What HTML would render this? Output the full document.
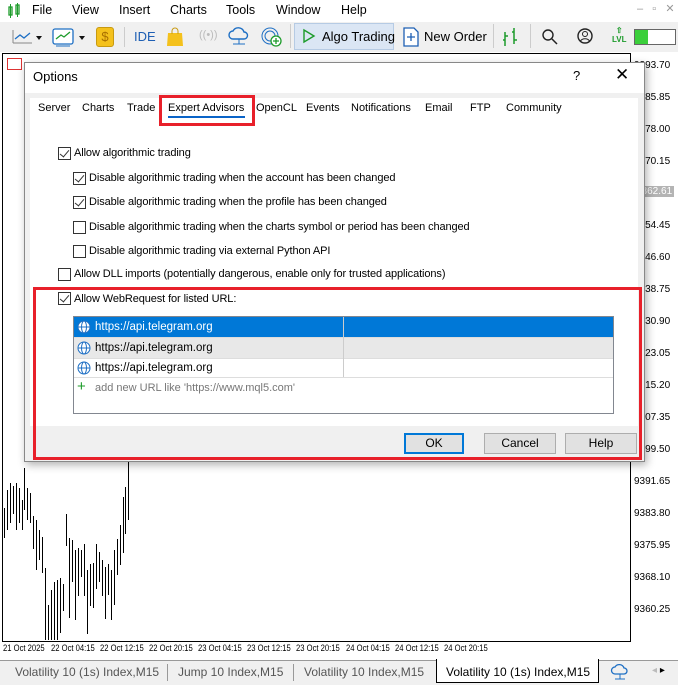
<!DOCTYPE html>
<html><head><meta charset="utf-8"><style>
*{margin:0;padding:0;box-sizing:border-box}
body{width:678px;height:685px;overflow:hidden;background:#f0f0f0;font-family:"Liberation Sans",sans-serif;font-size:12px;color:#000;position:relative}
.a{position:absolute;white-space:nowrap}
.menu span{position:absolute;top:3px;font-size:12.5px}
.cb{position:absolute;width:13px;height:13px;border:1px solid #333;background:#fff}
.cb.on::after{content:"";position:absolute;left:3px;top:0px;width:4px;height:8px;border:solid #333;border-width:0 1.5px 1.5px 0;transform:rotate(40deg)}
.lbl{position:absolute;font-size:11px;letter-spacing:-0.1px}
.btn{position:absolute;width:72px;height:21px;background:#e1e1e1;border:1px solid #adadad;text-align:center;line-height:19px;font-size:12px}
.ax{position:absolute;left:634px;font-size:10px;color:#000}
.tx{position:absolute;top:643px;font-size:9px;transform:scaleX(.85);transform-origin:left}
.tabs span{position:absolute;font-size:11px}
</style></head><body>
<div class="a" style="left:0;top:0;width:678px;height:22px;background:#fff"></div>
<svg class="a" style="left:7px;top:3px" width="14" height="16"><rect x="2" y="4" width="3" height="8" fill="none" stroke="#1c9b2a" stroke-width="1.3"/><rect x="9" y="2" width="3" height="9" fill="none" stroke="#1c9b2a" stroke-width="1.3"/><line x1="3.5" y1="1" x2="3.5" y2="15" stroke="#1c9b2a"/><line x1="10.5" y1="0" x2="10.5" y2="14" stroke="#1c9b2a"/></svg>
<div class="menu"><span style="left:32px">File</span><span style="left:72px">View</span><span style="left:119px">Insert</span><span style="left:170px">Charts</span><span style="left:226px">Tools</span><span style="left:276px">Window</span><span style="left:341px">Help</span></div>
<div class="a" style="left:637px;top:2px;color:#999;font-size:11px">–&nbsp;&nbsp;&nbsp;▫&nbsp;&nbsp;&nbsp;✕</div>
<div class="a" style="left:0;top:22px;width:678px;height:30px;background:#f0f0f0"></div>
<svg class="a" style="left:10px;top:27px" width="34" height="20"><path d="M3 16V3 M3 16H22" stroke="#888" fill="none"/><path d="M5 12l5-4 4 3 6-5" stroke="#1e6fc4" fill="none" stroke-width="1.3"/><path d="M26 9l3 4 3-4z" fill="#111"/></svg>
<svg class="a" style="left:52px;top:27px" width="36" height="22"><rect x="1" y="2" width="20" height="15" rx="2" fill="#fff" stroke="#1e6fc4" stroke-width="1.3"/><path d="M4 12l5-4 3 2 6-5" stroke="#1c9b2a" fill="none" stroke-width="1.3"/><path d="M4 19h14" stroke="#1e6fc4"/><path d="M27 9l3 4 3-4z" fill="#111"/></svg>
<div class="a" style="left:96px;top:27px;width:18px;height:20px;background:#f4c11c;border:1px solid #c89a10;border-radius:3px;text-align:center;font-size:13px;line-height:18px;color:#a86f00">$</div>
<div class="a" style="left:124px;top:27px;width:1px;height:20px;background:#ccc"></div>
<div class="a" style="left:134px;top:29px;color:#1e5fb4;font-size:13px">IDE</div>
<svg class="a" style="left:164px;top:26px" width="22" height="22"><path d="M4 7h14l1 13H3z" fill="#f4c11c"/><path d="M8 8V5a3 3 0 016 0v3" fill="none" stroke="#c89a10"/></svg>
<div class="a" style="left:199px;top:29px;color:#bbb;font-size:11px">((•))</div>
<svg class="a" style="left:228px;top:26px" width="22" height="22"><path d="M5 13a4 4 0 010-8 6 6 0 0111 1 3.5 3.5 0 010 7z" fill="none" stroke="#1e6fc4" stroke-width="1.4"/><path d="M11 13v5M5 18h12" stroke="#1e6fc4"/></svg>
<svg class="a" style="left:260px;top:25px" width="24" height="24"><circle cx="10" cy="11" r="8" fill="none" stroke="#1e6fc4"/><circle cx="10" cy="11" r="5" fill="none" stroke="#1e6fc4"/><circle cx="16" cy="16" r="5" fill="#fff" stroke="#1c9b2a" stroke-width="1.3"/><path d="M16 13v6M13 16h6" stroke="#1c9b2a" stroke-width="1.3"/></svg>
<div class="a" style="left:290px;top:24px;width:1px;height:24px;background:#ccc"></div>
<div class="a" style="left:294px;top:23px;width:100px;height:27px;background:#dbe6f4;border:1px solid #b6cbe4"></div>
<svg class="a" style="left:302px;top:28px" width="14" height="16"><path d="M2 2l10 6-10 6z" fill="none" stroke="#1c9b2a" stroke-width="1.4"/></svg>
<div class="a" style="left:322px;top:29px;font-size:13px">Algo Trading</div>
<svg class="a" style="left:402px;top:26px" width="18" height="22"><path d="M2 2h10l4 4v14H2z" fill="#fff" stroke="#1e5fb4" stroke-width="1.3"/><path d="M9 7v8M5 11h8" stroke="#1e5fb4" stroke-width="1.3"/></svg>
<div class="a" style="left:424px;top:29px;font-size:13px">New Order</div>
<div class="a" style="left:493px;top:24px;width:1px;height:24px;background:#ccc"></div>
<svg class="a" style="left:500px;top:26px" width="22" height="22"><path d="M5 6v14M3 14h2M5 10h3M14 2v16M12 6h2M14 14h3" stroke="#1c9b2a" stroke-width="1.5"/></svg>
<div class="a" style="left:530px;top:24px;width:1px;height:24px;background:#ccc"></div>
<svg class="a" style="left:541px;top:28px" width="18" height="18"><circle cx="7" cy="7" r="5" fill="none" stroke="#222" stroke-width="1.4"/><path d="M11 11l5 5" stroke="#222" stroke-width="1.5"/></svg>
<svg class="a" style="left:576px;top:27px" width="18" height="18"><circle cx="9" cy="9" r="7" fill="none" stroke="#222" stroke-width="1.4"/><circle cx="9" cy="7" r="2.5" fill="none" stroke="#222"/><path d="M4.5 14a5 4 0 019 0" fill="none" stroke="#222"/></svg>
<div class="a" style="left:612px;top:26px;color:#1c9b2a;font-size:8px;line-height:9px;text-align:center;font-weight:bold">⇧<br>LVL</div>
<div class="a" style="left:634px;top:29px;width:42px;height:16px;border:1px solid #666;background:#fff"><div style="width:13px;height:14px;background:#3bcf3b"></div></div>
<div class="a" style="left:0;top:52px;width:678px;height:608px;background:#fff"></div>
<div class="a" style="left:2px;top:53px;width:629px;height:589px;border:1px solid #000"></div>
<div class="a" style="left:7px;top:58px;width:15px;height:12px;border:1px solid #d33;"></div>
<div class="ax" style="top:60px">9393.70</div>
<div class="ax" style="top:92px">9385.85</div>
<div class="ax" style="top:124px">9378.00</div>
<div class="ax" style="top:156px">9370.15</div>
<div class="ax" style="top:186px;background:#b4b4b4;color:#fff;padding:0 2px">9362.61</div>
<div class="ax" style="top:220px">9354.45</div>
<div class="ax" style="top:252px">9346.60</div>
<div class="ax" style="top:284px">9338.75</div>
<div class="ax" style="top:316px">9330.90</div>
<div class="ax" style="top:348px">9323.05</div>
<div class="ax" style="top:380px">9315.20</div>
<div class="ax" style="top:412px">9307.35</div>
<div class="ax" style="top:444px">9399.50</div>
<div class="ax" style="top:476px">9391.65</div>
<div class="ax" style="top:508px">9383.80</div>
<div class="ax" style="top:540px">9375.95</div>
<div class="ax" style="top:572px">9368.10</div>
<div class="ax" style="top:604px">9360.25</div>
<div class="tx" style="left:3px">21 Oct 2025</div>
<div class="tx" style="left:51px">22 Oct 04:15</div>
<div class="tx" style="left:100px">22 Oct 12:15</div>
<div class="tx" style="left:149px">22 Oct 20:15</div>
<div class="tx" style="left:198px">23 Oct 04:15</div>
<div class="tx" style="left:247px">23 Oct 12:15</div>
<div class="tx" style="left:296px">23 Oct 20:15</div>
<div class="tx" style="left:346px">24 Oct 04:15</div>
<div class="tx" style="left:395px">24 Oct 12:15</div>
<div class="tx" style="left:444px">24 Oct 20:15</div>
<svg class="a" style="left:0;top:440px" width="140" height="200" stroke="#000" stroke-width="1" shape-rendering="crispEdges">
<path d="M4.5 68v30M7.5 50v40M10.5 43v40M13.5 46v28M16.5 43v47M19.5 48v35M22.5 60v30M24.5 28v42M27.5 48v32M30.5 53v30M33.5 76v33M36.5 80v50M39.5 90v30M42.5 97v36M45.5 128v90M48.5 165v70M51.5 150v85M54.5 142v71M57.5 140v60M60.5 138v55M63.5 144v27M66.5 74v32M69.5 98v80M72.5 100v42M75.5 110v70M78.5 108v48M81.5 110v27M84.5 104v52M87.5 130v64M90.5 124v42M93.5 123v45M96.5 104v45M99.5 112v30M102.5 120v36M105.5 127v52M108.5 124v31M111.5 130v50M114.5 110v55M117.5 99v36M120.5 85v40M123.5 57v56M125.5 47v47M128.5 20v60"/>
</svg>
<div class="a" style="left:0;top:660px;width:678px;height:25px;background:#f0f0f0;border-top:1px solid #999"></div>
<div class="a" style="left:15px;top:665px;color:#555;font-size:12px">Volatility 10 (1s) Index,M15</div>
<div class="a" style="left:167px;top:664px;width:1px;height:17px;background:#999"></div>
<div class="a" style="left:178px;top:665px;color:#555;font-size:12px">Jump 10 Index,M15</div>
<div class="a" style="left:293px;top:664px;width:1px;height:17px;background:#999"></div>
<div class="a" style="left:304px;top:665px;color:#555;font-size:12px">Volatility 10 Index,M15</div>
<div class="a" style="left:436px;top:659px;width:163px;height:24px;background:#fff;border:1px solid #000;border-top:none"></div>
<div class="a" style="left:446px;top:665px;font-size:12px">Volatility 10 (1s) Index,M15</div>
<svg class="a" style="left:610px;top:663px" width="20" height="18"><path d="M5 11a3.5 3.5 0 010-7 5 5 0 019 1 3 3 0 010 6z" fill="none" stroke="#1e6fc4" stroke-width="1.3"/><path d="M10 11v5M5 16h10" stroke="#1e6fc4"/></svg>
<div class="a" style="left:652px;top:665px;color:#bbb;font-size:10px">◂ <span style="color:#000">▸</span></div>
<div class="a" style="left:24px;top:62px;width:621px;height:400px;background:#f0f0f0;border:1px solid #888;box-shadow:2px 3px 8px rgba(0,0,0,.3)"></div>
<div class="a" style="left:25px;top:63px;width:619px;height:30px;background:#fff"></div>
<div class="a" style="left:33px;top:69px;font-size:13px">Options</div>
<div class="a" style="left:573px;top:68px;font-size:13px">?</div>
<div class="a" style="left:615px;top:65px;font-size:17px;font-weight:300">✕</div>
<div class="a" style="left:30px;top:98px;width:608px;height:328px;background:#fff"></div>
<div class="a tabs" style="top:102px;left:0">
<span style="left:38px">Server</span><span style="left:82px">Charts</span><span style="left:127px">Trade</span><span style="left:168px">Expert Advisors</span><span style="left:256px">OpenCL</span><span style="left:306px">Events</span><span style="left:351px">Notifications</span><span style="left:425px">Email</span><span style="left:470px">FTP</span><span style="left:506px">Community</span></div>
<div class="a" style="left:168px;top:116px;width:77px;height:2px;background:#0a64c8"></div>
<div class="a" style="left:159px;top:95px;width:96px;height:31px;border:3px solid #e8202a"></div>
<div class="cb on" style="left:58px;top:147px"></div><div class="lbl" style="left:74px;top:147px">Allow algorithmic trading</div>
<div class="cb on" style="left:73px;top:172px"></div><div class="lbl" style="left:89px;top:172px">Disable algorithmic trading when the account has been changed</div>
<div class="cb on" style="left:73px;top:196px"></div><div class="lbl" style="left:89px;top:196px">Disable algorithmic trading when the profile has been changed</div>
<div class="cb" style="left:73px;top:221px"></div><div class="lbl" style="left:89px;top:221px">Disable algorithmic trading when the charts symbol or period has been changed</div>
<div class="cb" style="left:73px;top:245px"></div><div class="lbl" style="left:89px;top:245px">Disable algorithmic trading via external Python API</div>
<div class="cb" style="left:58px;top:268px"></div><div class="lbl" style="left:74px;top:268px">Allow DLL imports (potentially dangerous, enable only for trusted applications)</div>
<div class="cb on" style="left:58px;top:292px"></div><div class="lbl" style="left:74px;top:293px">Allow WebRequest for listed URL:</div>
<div class="a" style="left:73px;top:316px;width:541px;height:98px;border:1px solid #828790;background:#fff"></div>
<div class="a" style="left:74px;top:317px;width:539px;height:20px;background:#0078d7"></div>
<div class="a" style="left:74px;top:338px;width:539px;height:20px;background:#e8e8e8"></div>
<div class="a" style="left:74px;top:337px;width:539px;height:1px;background:#ddd"></div>
<div class="a" style="left:74px;top:358px;width:539px;height:1px;background:#ddd"></div>
<div class="a" style="left:74px;top:377px;width:539px;height:1px;background:#ddd"></div>
<div class="a" style="left:343px;top:317px;width:1px;height:60px;background:#ccc"></div>
<svg class="a" style="left:76px;top:319px" width="16" height="60"><g fill="#fff" stroke="#1e6fc4" stroke-width="1"><circle cx="8" cy="8" r="6"/><ellipse cx="8" cy="8" rx="2.5" ry="6"/><path d="M2 8h12"/><circle cx="8" cy="29" r="6"/><ellipse cx="8" cy="29" rx="2.5" ry="6"/><path d="M2 29h12"/><circle cx="8" cy="49" r="6"/><ellipse cx="8" cy="49" rx="2.5" ry="6"/><path d="M2 49h12"/></g></svg>
<div class="a" style="left:95px;top:321px;color:#fff;font-size:11.5px">https://api.telegram.org</div>
<div class="a" style="left:95px;top:342px;font-size:11.5px">https://api.telegram.org</div>
<div class="a" style="left:95px;top:362px;font-size:11.5px">https://api.telegram.org</div>
<div class="a" style="left:77px;top:378px;color:#1c9b2a;font-size:15px">+</div>
<div class="a" style="left:95px;top:382px;color:#777;font-size:11px">add new URL like 'https://www.mql5.com'</div>
<div class="btn" style="left:404px;top:433px;width:60px;border:2px solid #0078d7;line-height:17px">OK</div>
<div class="btn" style="left:484px;top:433px">Cancel</div>
<div class="btn" style="left:565px;top:433px">Help</div>
<div class="a" style="left:33px;top:287px;width:609px;height:173px;border:3px solid #e8202a"></div>
</body></html>
